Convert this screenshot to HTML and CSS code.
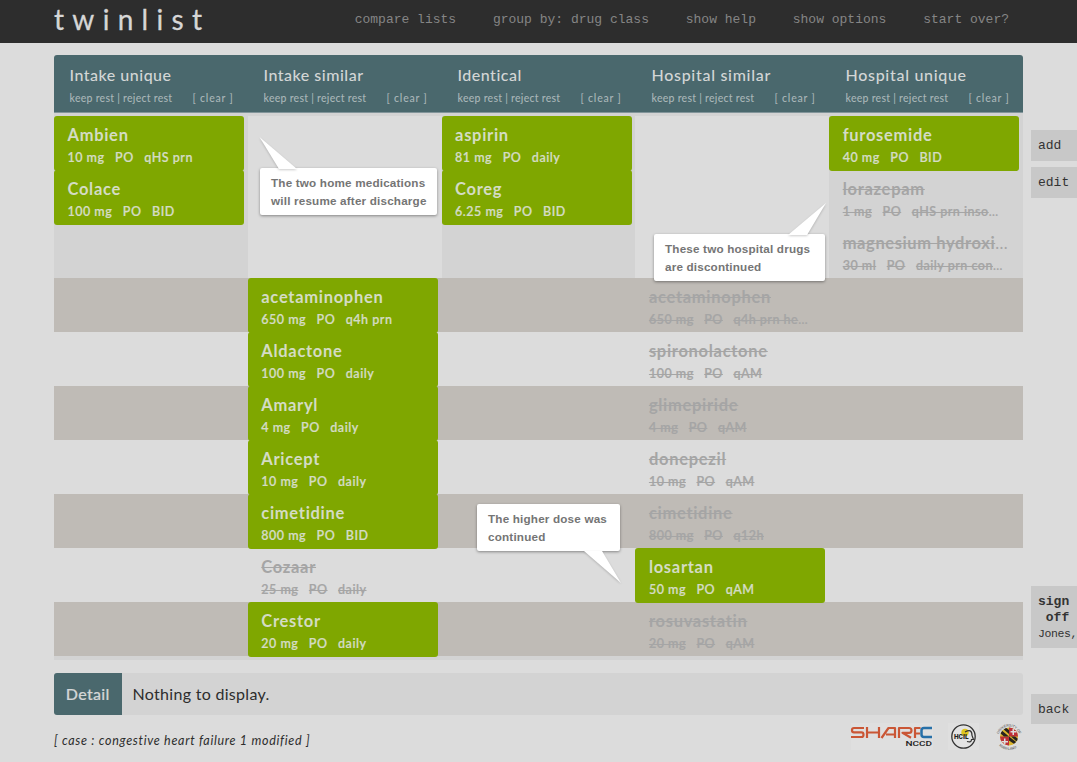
FILE: index.html
```html
<!DOCTYPE html>
<html lang="en">
<head>
<meta charset="utf-8">
<title>twinlist</title>
<link rel="stylesheet" href="styles.css">
</head>
<body>
<header class="topbar">
  <div class="brand">twinlist</div>
  <nav class="nav"><span>compare lists</span><span>group by: drug class</span><span>show help</span><span>show options</span><span>start over?</span></nav>
</header>
<div class="page">
  <main class="content">
    <section class="board">
      <div class="heads">
        <div class="head"><h2>Intake unique</h2><div class="links"><span>keep rest | reject rest</span><span class="clear">[ clear ]</span></div></div>
        <div class="head"><h2>Intake similar</h2><div class="links"><span>keep rest | reject rest</span><span class="clear">[ clear ]</span></div></div>
        <div class="head"><h2>Identical</h2><div class="links"><span>keep rest | reject rest</span><span class="clear">[ clear ]</span></div></div>
        <div class="head"><h2>Hospital similar</h2><div class="links"><span>keep rest | reject rest</span><span class="clear">[ clear ]</span></div></div>
        <div class="head"><h2>Hospital unique</h2><div class="links"><span>keep rest | reject rest</span><span class="clear">[ clear ]</span></div></div>
      </div>
      <div class="unique">
        <div class="col shade">
          <div class="drug keep"><h3>Ambien</h3><p><span>10 mg</span><span>PO</span><span>qHS prn</span></p></div>
          <div class="drug keep"><h3>Colace</h3><p><span>100 mg</span><span>PO</span><span>BID</span></p></div>
        </div>
        <div class="col"></div>
        <div class="col shade">
          <div class="drug keep"><h3>aspirin</h3><p><span>81 mg</span><span>PO</span><span>daily</span></p></div>
          <div class="drug keep"><h3>Coreg</h3><p><span>6.25 mg</span><span>PO</span><span>BID</span></p></div>
        </div>
        <div class="col"></div>
        <div class="col shade">
          <div class="drug keep"><h3>furosemide</h3><p><span>40 mg</span><span>PO</span><span>BID</span></p></div>
          <div class="drug reject"><h3>lorazepam</h3><p><span>1 mg</span><span>PO</span><span>qHS prn inso</span><i>…</i></p></div>
          <div class="drug reject"><h3 class="long">magnesium hydroxi<i>…</i></h3><p><span>30 ml</span><span>PO</span><span>daily prn con</span><i>…</i></p></div>
        </div>
      </div>
      <div class="pair">
        <div class="drug keep left"><h3>acetaminophen</h3><p><span>650 mg</span><span>PO</span><span>q4h prn</span></p></div>
        <div class="drug reject right"><h3>acetaminophen</h3><p><span>650 mg</span><span>PO</span><span>q4h prn he</span><i>…</i></p></div>
      </div>
      <div class="pair">
        <div class="drug keep left"><h3>Aldactone</h3><p><span>100 mg</span><span>PO</span><span>daily</span></p></div>
        <div class="drug reject right"><h3>spironolactone</h3><p><span>100 mg</span><span>PO</span><span>qAM</span></p></div>
      </div>
      <div class="pair">
        <div class="drug keep left"><h3>Amaryl</h3><p><span>4 mg</span><span>PO</span><span>daily</span></p></div>
        <div class="drug reject right"><h3>glimepiride</h3><p><span>4 mg</span><span>PO</span><span>qAM</span></p></div>
      </div>
      <div class="pair">
        <div class="drug keep left"><h3>Aricept</h3><p><span>10 mg</span><span>PO</span><span>daily</span></p></div>
        <div class="drug reject right"><h3>donepezil</h3><p><span>10 mg</span><span>PO</span><span>qAM</span></p></div>
      </div>
      <div class="pair">
        <div class="drug keep left"><h3>cimetidine</h3><p><span>800 mg</span><span>PO</span><span>BID</span></p></div>
        <div class="drug reject right"><h3>cimetidine</h3><p><span>800 mg</span><span>PO</span><span>q12h</span></p></div>
      </div>
      <div class="pair">
        <div class="drug reject left"><h3>Cozaar</h3><p><span>25 mg</span><span>PO</span><span>daily</span></p></div>
        <div class="drug keep right"><h3>losartan</h3><p><span>50 mg</span><span>PO</span><span>qAM</span></p></div>
      </div>
      <div class="pair">
        <div class="drug keep left"><h3>Crestor</h3><p><span>20 mg</span><span>PO</span><span>daily</span></p></div>
        <div class="drug reject right"><h3>rosuvastatin</h3><p><span>20 mg</span><span>PO</span><span>qAM</span></p></div>
      </div>
    </section>
    <section class="detail"><div class="detail-tag">Detail</div><div class="detail-text">Nothing to display.</div></section>
    <footer class="foot">
      <div class="case">[ case : congestive heart failure 1 modified ]</div>
      <div class="logos">
        <svg class="sharp" width="84" height="27" viewBox="0 0 84 27" fill="none">
          <rect x="2" width="82" height="27" fill="#dfdfdf"/>
          <g stroke="#ca5635" stroke-width="2.200" stroke-linejoin="round">
            <path d="M15 5H5q-2 0-2 2.200t2 2.200h7.500q2 0 2 2.300t-2 2.300H2"/>
            <path d="M18 4v11M30 4v11M18 9.500h12"/>
            <path d="M32.500 15l7-10H46v10M37 11.500h9"/>
            <path d="M50 15V5h10q2.500 0 2.500 2.400T60 9.800h-6.500l8.500 5"/>
            <path d="M66 15V5h5.500M66 10.500h5"/>
          </g>
          <path d="M83 5H75q-2.500 0-2.500 2.500v4q0 2.500 2.500 2.500h8" stroke="#2770a8" stroke-width="2.500"/>
          <text x="56.500" y="22.500" class="nccd" textLength="26.500" lengthAdjust="spacingAndGlyphs">NCCD</text>
        </svg>
        <svg class="hcil" width="31" height="27" viewBox="0 0 31 27" fill="none">
          <rect width="31" height="27" fill="#dfdfdf"/>
          <circle cx="15.500" cy="13.500" r="11.700" fill="#e3e3e3" stroke="#333" stroke-width="1.300"/>
          <circle cx="17" cy="9.500" r="3.700" fill="#e0c51e"/>
          <path d="M17 9q7-4 7 3.500l1.500 4H23.500q0 3.500-4.500 2" stroke="#333" stroke-width="1.200"/>
          <text x="6" y="16" class="hcil-text" textLength="14.500" lengthAdjust="spacingAndGlyphs">HCIL</text>
        </svg>
        <svg class="umd" width="28" height="28" viewBox="0 0 28 28">
          <defs>
            <clipPath id="seal"><circle cx="14" cy="13.500" r="9"/></clipPath>
            <path id="ring-top" d="M3.500 14a10.500 10.500 0 0 1 21 0"/>
            <path id="ring-bottom" d="M1 14a13 13 0 0 0 26 0"/>
          </defs>
          <g clip-path="url(#seal)">
            <rect width="28" height="28" fill="#d9b42b"/>
            <path d="M14 4h10v9.500H14zM4 13.500h10v10H4z" fill="#bd3038"/>
            <path d="M5 6l9 7.500H9L5 10zM10 4l4 3v4L7 5zM14 13.500l9 7v3l-9-6zM20 13.500l4 3v4l-8-7z" fill="#272320"/>
            <path d="M17.500 6h1.500v6h-1.500zM15.500 8h6v1.500h-6zM9 15.500h1.500v6H9zM6.500 18h6.500v1.500H6.500z" fill="#ddd"/>
          </g>
          <text class="seal-text"><textPath href="#ring-top" startOffset="3">UNIVERSITY OF</textPath></text>
          <text class="seal-text"><textPath href="#ring-bottom" startOffset="9">MARYLAND</textPath></text>
        </svg>
      </div>
    </footer>
  </main>
  <aside class="side">
    <div class="tab add">add</div>
    <div class="tab edit">edit</div>
    <div class="tab sign"><b>sign<br>&nbsp;off</b><small>Jones,</small></div>
    <div class="tab back">back</div>
  </aside>
</div>
<div class="note note-home">The two home medications<br>will resume after discharge<svg class="tail" width="40" height="34" viewBox="0 0 40 34"><path d="M0.500 1L38 33H20z"/></svg></div>
<div class="note note-hospital">These two hospital drugs<br>are discontinued<svg class="tail" width="40" height="34" viewBox="0 0 40 34"><path d="M39 1L1 33H20z"/></svg></div>
<div class="note note-dose">The higher dose was<br>continued<svg class="tail" width="40" height="34" viewBox="0 0 40 34"><path d="M1 1H19L38 33z"/></svg></div>
</body>
</html>
```
FILE: styles.css
```css
* { box-sizing: border-box; }
body { margin: 0; width: 1077px; height: 762px; overflow: hidden; position: relative; background: #dcdcdc; font-family: Lato, "Open Sans", sans-serif; color: #2d2d2d; }
h2, h3, p { margin: 0; }
.topbar { height: 43px; background: #2d2d2d; display: flex; justify-content: space-between; padding: 0 68px 0 54px; }
.brand { font-size: 28px; line-height: 38px; letter-spacing: 8.300px; color: #d6d6d6; white-space: nowrap; -webkit-text-stroke: .3px #d6d6d6; }
.nav { display: flex; gap: 36.800px; font: 13px/40px "Liberation Mono", monospace; color: #858585; white-space: nowrap; }
.page { display: flex; }
.content { width: 969px; margin: 12px 8px 0 54px; flex: none; }
.board { border-bottom: 4px solid #d3d3d3; }
.heads { display: grid; grid-template-columns: repeat(5, 194px); height: 58px; background: #4a686d; border-bottom: 1px solid #82959a; border-radius: 3px 3px 0 0; overflow: hidden; }
.head { padding: 9px 0 0 15.500px; white-space: nowrap; }
.head h2 { font-size: 16px; line-height: 22px; font-weight: 500; letter-spacing: .5px; color: #d3d6d6; }
.head:nth-child(n+4) h2 { letter-spacing: .7px; }
.links { display: flex; width: 164px; justify-content: space-between; font-size: 10.500px; line-height: 14px; margin-top: 5px; color: #a9b6b8; font-weight: 500; letter-spacing: .27px; }
.clear { letter-spacing: .8px; }
.unique { display: grid; grid-template-columns: repeat(5, 1fr); height: 165px; border-top: 3px solid #d3d3d3; }
.shade { background: #d3d3d3; }
.drug { width: 190px; height: 54px; padding: 9px 0 0 13.500px; white-space: nowrap; }
.drug h3 { font-size: 16.500px; line-height: 20px; font-weight: 700; letter-spacing: .7px; }
.drug .long { letter-spacing: .6px; }
.drug p { font-size: 12.500px; line-height: 16px; margin-top: 5px; font-weight: 600; letter-spacing: .5px; display: flex; -webkit-text-stroke: .2px currentColor; }
.drug p span + span { margin-left: 10.500px; }
.drug i { font-style: normal; font-weight: 400; display: inline-block; text-decoration: none; letter-spacing: 1px; }
.keep { background: #7fa700; color: #d4dcc4; border-radius: 3px; height: 55px; margin-bottom: -1px; }
.reject { color: #a5a5a5; }
.reject h3, .reject p span { text-decoration: line-through; text-decoration-thickness: 1px; }
.pair { display: grid; grid-template-columns: repeat(5, 1fr); height: 54px; }
.pair:nth-child(odd) { background: #bfbbb6; }
.left { grid-column: 2; }
.right { grid-column: 4; }
.detail { display: flex; height: 42px; margin-top: 13px; background: #d3d3d3; border-radius: 3px; overflow: hidden; line-height: 42px; font-size: 16px; letter-spacing: .3px; }
.detail-tag { width: 67.500px; background: #4a686d; color: #d3d6d6; text-align: center; font-weight: 500; -webkit-text-stroke: .2px currentColor; }
.detail-text { padding-left: 11px; }
.foot { display: flex; justify-content: space-between; }
.case { font-size: 12.500px; line-height: 18px; font-style: italic; margin-top: 17px; letter-spacing: .7px; }
.logos { display: flex; align-items: flex-start; padding-top: 8px; }
.sharp { margin-right: 15px; }
.hcil { margin-right: 16px; }
.nccd { font: 500 7.500px Roboto, sans-serif; fill: #222; }
.hcil-text { font: 900 6.500px Roboto, sans-serif; fill: #222; }
.seal-text { font: 3.500px "Liberation Sans", sans-serif; fill: #444; }
.side { width: 46px; flex: none; padding-top: 87px; overflow: hidden; font: 13px/32px "Liberation Mono", monospace; color: #333; }
.tab { height: 31px; padding-left: 7px; background: #c8c8c8; white-space: nowrap; }
.edit { margin-top: 6px; }
.sign { height: 62px; margin-top: 388px; padding-top: 8px; line-height: 16px; }
.sign small { display: block; font-size: 11.500px; letter-spacing: -.4px; }
.back { height: 30px; margin-top: 46px; }
.note { position: absolute; height: 47px; padding: 6px 11px; background: #fff; border-radius: 2px; box-shadow: 0 1px 3px rgba(0,0,0,.4); font: 700 11.700px/18px "Liberation Sans", sans-serif; letter-spacing: .18px; color: #757575; white-space: nowrap; }
.tail { position: absolute; fill: #fff; filter: drop-shadow(0 1px 1px rgba(0,0,0,.2)); }
.note-home { left: 260px; top: 168px; width: 177px; }
.note-home .tail { left: -1px; top: -32px; }
.note-hospital { left: 654px; top: 234px; width: 171px; }
.note-hospital .tail { left: 133px; top: -32px; }
.note-dose { left: 477px; top: 504px; width: 143px; }
.note-dose .tail { left: 106px; top: 46px; }
```
